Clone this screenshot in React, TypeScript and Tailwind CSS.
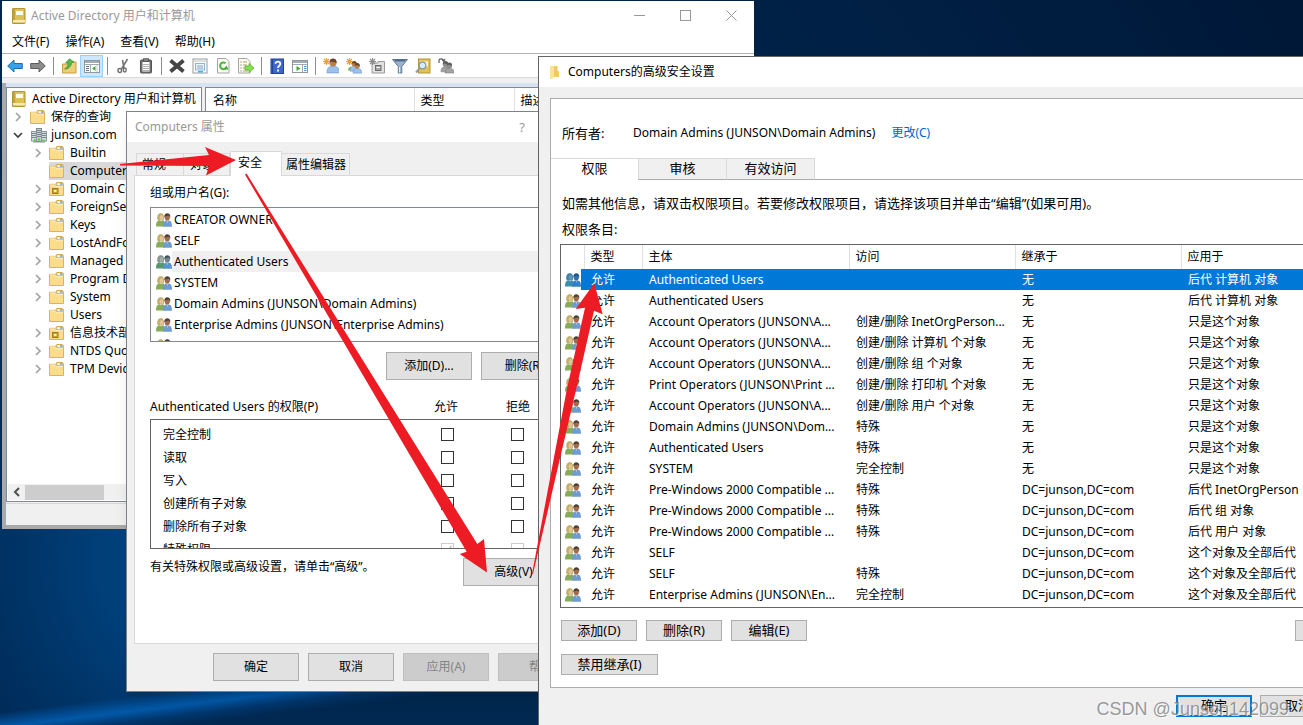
import type { ReactNode } from "react";

/* ---------- icons ---------- */

function ConsoleIcon() {
  return (
    <svg width="14" height="16" viewBox="0 0 14 16" className="shrink-0">
      <rect x="0.5" y="0.5" width="12.5" height="15" rx="0.5" fill="#d3ad3c" stroke="#b39437" />
      <rect x="1" y="1" width="2" height="14" fill="#c3a13c" />
      <rect x="3" y="1" width="9" height="13" fill="#dec05a" />
      <rect x="4" y="3" width="7" height="4" fill="#fffef2" />
      <rect x="1" y="12" width="12" height="2.500" fill="#f6ebb4" />
    </svg>
  );
}

function FolderIcon({ unit = false }: { unit?: boolean }) {
  return (
    <svg width="15" height="14" viewBox="0 0 15 14" className="shrink-0">
      <path d="M7 4V1.200L8 .5h5.500l.8.8V13H7z" fill="#efcf7d" stroke="#d2ab57" />
      <rect x="8.500" y="1.300" width="4.800" height="1.500" fill="#fff" />
      <rect x="11" y="1.300" width="2.400" height="1.400" fill="#4f9be0" />
      <path d="M.5 2.300h5.300L7.200 4H14.500V13.500H.5z" fill="#f9dc8c" stroke="#dab35d" />
      <path d="M1 3h4.700L7 4.700h7" fill="none" stroke="#fff0bd" />
      {unit && (
        <g>
          <rect x="3.500" y="6.500" width="5.500" height="5" fill="#c9a52c" stroke="#9d7f1c" />
          <rect x="5" y="8" width="2.500" height="1.800" fill="#fff6cf" />
        </g>
      )}
    </svg>
  );
}

function DomainIcon() {
  return (
    <svg width="16" height="15" viewBox="0 0 16 15" className="shrink-0">
      <rect x="5.500" y="0.500" width="5" height="13" fill="#c5ccd1" stroke="#7b858c" />
      <rect x="0.500" y="3.500" width="5" height="9.500" fill="#d5dadd" stroke="#8d969c" />
      <rect x="10.500" y="3.500" width="5" height="9.500" fill="#d5dadd" stroke="#8d969c" />
      <path d="M6 2.500h4M6 4.500h4M6 6.500h4M6 8.500h4M1 5.500h4M1 7.500h4M1 9.500h4M11 5.500h4M11 7.500h4M11 9.500h4" stroke="#7b878f" />
      <path d="M4 11.500v2M8 10.500v2M12.500 11.500v2" stroke="#4fd32f" strokeWidth="2" />
      <path d="M2 14h12" stroke="#8a949a" />
    </svg>
  );
}

function UsersIcon({ tone = "normal" }: { tone?: "normal" | "dim" | "blue" }) {
  const c = {
    normal: ["#bfae66", "#e6c19a", "#86ab59", "#4b4038", "#a06c4a", "#6f9bd0"],
    dim: ["#86968f", "#a2b0ab", "#57976c", "#435563", "#71838b", "#5693cf"],
    blue: ["#3f7fa5", "#5d9bb5", "#3a8fae", "#20558d", "#356fa0", "#2f7fce"],
  }[tone];
  return (
    <svg width="16" height="14" viewBox="0 0 16 14" className="shrink-0">
      <path d="M1.300 6.500C.8 2 2.500.2 4.800.2S8.500 2 8 6.500L6.700 7.600H2.600z" fill={c[0]} />
      <ellipse cx="5.500" cy="4.500" rx="1.900" ry="2.600" fill={c[1]} />
      <path d="M0 13.500C0 9.800.8 7.800 3 7.200L5.200 8.200 7 7.200C8.200 7.700 8.800 9 8.800 13.500z" fill={c[2]} />
      <path d="M8.300 4.200C8.100 1.400 9.600.2 11.300.2s3.300 1.200 3 4z" fill={c[3]} />
      <path d="M8.700 3.400C10 3.400 11.500 3 12.500 2.600l1.500 1C14 6 13 7.800 11.300 7.800S8.600 6 8.700 3.400z" fill={c[4]} />
      <path d="M7.200 13.800C7.200 9.800 8 8.200 10 7.500l1.300.9 1.500-.9C15 8 16 9.600 16 13.800z" fill={c[5]} />
      <path d="M10.800 8.500h1.100l-.5 2z" fill="#fff" fillOpacity=".5" />
    </svg>
  );
}

function Chevron({ open = false }: { open?: boolean }) {
  return open ? (
    <svg width="10" height="10" viewBox="0 0 10 10" className="shrink-0">
      <path d="M1 3l4 4 4-4" fill="none" stroke="#404040" strokeWidth="1.700" />
    </svg>
  ) : (
    <svg width="10" height="10" viewBox="0 0 10 10" className="shrink-0">
      <path d="M3 1l4 4-4 4" fill="none" stroke="#a3a3a3" strokeWidth="1.700" />
    </svg>
  );
}

/* ---------- toolbar ---------- */

const Person = ({ x, y, s, grey = false }: { x: number; y: number; s: number; grey?: boolean }) => (
  <g transform={`translate(${x} ${y}) scale(${s})`}>
    <path d="M0 12C0 8 1.500 6.500 5 6.500S10.500 8 10.500 12z" fill={grey ? "#a3a3a3" : "#9cc1ec"} stroke={grey ? "#777" : "#6c97cb"} strokeWidth=".6" />
    <circle cx="5" cy="3.600" r="3" fill={grey ? "#8c8c8c" : "#b9824d"} />
    <path d="M2 3.400C2 1 3.300 0 5 0s3.200 1 3 3.800C6.500 3.500 4 1.700 2 3.400z" fill={grey ? "#5d5d5d" : "#6b4526"} />
  </g>
);

const Spark = ({ color }: { color: string }) => (
  <path d="M3.500 0v7M0 3.500h7M1 1l5 5M6 1L1 6" stroke={color} strokeWidth="1.200" />
);

const Sheet = ({ children }: { children: ReactNode }) => (
  <g>
    <path d="M.5.5h8.500l3 3v11.500H.5z" fill="#fdfbf0" stroke="#a5a5a5" />
    {children}
  </g>
);

type Tool = { label: string; art: ReactNode; active?: boolean };

const toolGroups: Tool[][] = [
  [
    { label: "后退", art: <path d="M.7 8L7 2v3.500h8.300v5H7V14z" fill="#36a3e6" stroke="#1b6fae" /> },
    { label: "前进", art: <path d="M15.300 8L9 2v3.500H.7v5H9V14z" fill="#8b8b8b" stroke="#5c5c5c" /> },
  ],
  [
    {
      label: "上一级",
      art: (
        <g>
          <path d="M1.500 6h5l1.500-2h7v11H1.500z" fill="#f0cd78" stroke="#c69c45" />
          <path d="M3.500 11C6 9.500 7.300 7.500 7 5H4.500L8.500 .7 13 4l-2.500.8C10.500 8.500 7 11.500 3.500 11z" fill="#52b947" stroke="#358a2d" strokeWidth=".6" />
        </g>
      ),
    },
    {
      label: "显示树",
      active: true,
      art: (
        <g>
          <rect x=".5" y="2.500" width="15" height="12" fill="#fff" stroke="#8f979e" />
          <path d="M1 4h14" stroke="#a5adb5" strokeWidth="2" />
          <path d="M1 6.500h14M6.500 7v7.500" stroke="#a1a8ae" />
          <path d="M2 8.500h3M2 10.500h3M2 12.500h3" stroke="#5f7489" />
          <path d="M11.500 8v5L8 10.500z" fill="#43a83b" />
          <path d="M13 7v7" stroke="#c5cad0" />
        </g>
      ),
    },
  ],
  [
    {
      label: "剪切",
      art: (
        <g fill="none" stroke="#6f6f6f">
          <path d="M12.500 1L6.500 11M7.500 2L9 10" strokeWidth="1.500" />
          <ellipse cx="4.800" cy="12.500" rx="1.800" ry="2" strokeWidth="1.400" />
          <ellipse cx="9.800" cy="12" rx="1.400" ry="2" strokeWidth="1.400" />
        </g>
      ),
    },
    {
      label: "复制",
      art: (
        <g>
          <rect x="2.500" y="2" width="11" height="13" rx="1" fill="#6f6f6f" stroke="#555" />
          <rect x="4.500" y="4" width="7" height="9.500" fill="#fff" />
          <path d="M5 6.500h6M5 8.500h6M5 10.500h6M5 12.500h6" stroke="#b0b0b0" />
          <rect x="5.500" y=".8" width="5" height="2.700" fill="#8a8a8a" stroke="#555" />
        </g>
      ),
    },
  ],
  [
    { label: "删除", art: <path d="M1.500 2.500l13 11M14.500 2.500l-13 11" stroke="#454545" strokeWidth="3.800" /> },
    {
      label: "属性",
      art: (
        <g>
          <rect x="1" y="1" width="14" height="14" fill="#fff" stroke="#9a9a9a" />
          <path d="M2 3h12" stroke="#b6c0ca" />
          <rect x="3.500" y="5.500" width="9" height="6.500" fill="#eef6fd" stroke="#8fb3d3" />
          <path d="M5 8h6M5 10h6" stroke="#8c9fb1" />
          <path d="M6 13.700h5" stroke="#3bb3f0" strokeWidth="1.600" />
        </g>
      ),
    },
    {
      label: "刷新",
      art: (
        <g transform="translate(2 0)">
          <Sheet>
            <path d="M8.500 5.300A3.300 3.300 0 1 0 9.300 9.500" fill="none" stroke="#4ab544" strokeWidth="2" />
            <path d="M6.500 11.500h5L9.500 7.500z" fill="#3fae3a" />
          </Sheet>
        </g>
      ),
    },
    {
      label: "导出列表",
      art: (
        <g>
          <Sheet>
            <path d="M2.500 4h1M2.500 7h1M2.500 10h1M2.500 13h1" stroke="#666" />
            <path d="M5 4h4M5 7h4M5 10h3M5 13h5" stroke="#b3a36a" />
          </Sheet>
          <path d="M7 8h4V5.500l5 4.500-5 4.500V12H7z" fill="#84e04c" stroke="#4fae2c" strokeWidth=".7" />
        </g>
      ),
    },
  ],
  [
    {
      label: "帮助",
      art: (
        <g>
          <rect x="2" y="1" width="12.500" height="14.500" fill="#3f66cc" stroke="#23429c" />
          <path d="M3.500 1v14.500" stroke="#23429c" />
          <path d="M6.500 5.800C6.500 2.800 11.500 3 11.300 6 11.200 7.800 9 7.800 9 10M9 11.500v2" fill="none" stroke="#fff" strokeWidth="1.800" />
        </g>
      ),
    },
    {
      label: "操作窗格",
      art: (
        <g>
          <rect x=".5" y="2.500" width="15" height="12" fill="#fff" stroke="#8f979e" />
          <path d="M1 4h14" stroke="#a5adb5" strokeWidth="2" />
          <path d="M1 6.500h14M10.500 7v7.500" stroke="#a1a8ae" />
          <path d="M12 8.500h2.500M12 10.500h2.500M12 12.500h2.500" stroke="#4e93c4" />
          <path d="M4.500 8v5l4-2.500z" fill="#43a83b" />
        </g>
      ),
    },
  ],
  [
    { label: "新建用户", art: <g><Person x={4} y={0.5} s={1.200} /><Spark color="#f0a02c" /></g> },
    { label: "新建组", art: <g><path d="M2 12.500C2.300 9 4 8.500 7 9l1 3.500z" fill="#7fb34d" /><Person x={4} y={3} s={0.850} /><Person x={7} y={5} s={0.850} /><Spark color="#f0a02c" /></g> },
    {
      label: "新建组织单位",
      art: (
        <g>
          <path d="M3 5h6V3.500h6.500v11.500H3z" fill="#e2e2e2" stroke="#9a9a9a" />
          <rect x="6.500" y="7.500" width="5.500" height="5" fill="#a5a5a5" stroke="#6c6c6c" />
          <path d="M7.500 9.500h3.500" stroke="#fff" />
          <Spark color="#8e8e8e" />
        </g>
      ),
    },
    {
      label: "筛选",
      art: (
        <g>
          <path d="M.5 1.500h15L9.800 8.500v6.500L6.300 15V8.500z" fill="#9db4cb" stroke="#607a95" />
          <path d="M2 1.500h12l-1.300 2H3.300z" fill="#4d6a88" />
          <path d="M7.500 9v5.500" stroke="#e9f1f9" />
        </g>
      ),
    },
    {
      label: "查找",
      art: (
        <g>
          <rect x="3.500" y="1" width="11.500" height="14" fill="#e2c257" stroke="#b39437" />
          <rect x="5" y="3.500" width="8" height="5" fill="#fff6cf" />
          <circle cx="7.500" cy="7.500" r="3.300" fill="#d8edf8" stroke="#7f9bac" strokeWidth="1.200" />
          <path d="M5 10L1 14.500" stroke="#9a9a9a" strokeWidth="2" />
        </g>
      ),
    },
    {
      label: "添加到组",
      art: (
        <g>
          <Person x={3} y={3} s={0.900} grey />
          <Person x={7} y={4.500} s={0.880} grey />
          <path d="M1 5V2.500C1 .5 5 .3 5.500 2.500M4 1.500l1.800 2L7 1" fill="none" stroke="#5a5a5a" strokeWidth="1.200" />
        </g>
      ),
    },
  ],
];

function Toolbar() {
  return (
    <div className="flex h-[23px] shrink-0 items-center pt-px pl-px">
      {toolGroups.map((group, g) => (
        <div key={g} className="flex items-center">
          {g > 0 && <span className="mr-[3px] ml-1 h-[18px] w-px bg-[#8c8c8c]" />}
          {group.map((t) => (
            <button
              key={t.label}
              aria-label={t.label}
              className={
                t.active
                  ? "flex h-[22px] w-[23px] items-center justify-center border border-[#99d1ff] bg-[#cce8ff]"
                  : "flex h-[22px] w-[23px] items-center justify-center"
              }
            >
              <svg width="16" height="16" viewBox="0 0 16 16" className="shrink-0">{t.art}</svg>
            </button>
          ))}
        </div>
      ))}
    </div>
  );
}

/* ---------- directory console ---------- */

type Node = { name: string; expandable?: boolean; selected?: boolean; unit?: boolean };

const containers: Node[] = [
  { name: "Builtin", expandable: true },
  { name: "Computers", selected: true },
  { name: "Domain Controllers", expandable: true, unit: true },
  { name: "ForeignSecurityPrincipals", expandable: true },
  { name: "Keys", expandable: true },
  { name: "LostAndFound", expandable: true },
  { name: "Managed Service Accounts", expandable: true },
  { name: "Program Data", expandable: true },
  { name: "System", expandable: true },
  { name: "Users" },
  { name: "信息技术部", expandable: true, unit: true },
  { name: "NTDS Quotas", expandable: true },
  { name: "TPM Devices", expandable: true },
];

function ConsoleWindow() {
  return (
    <section className="absolute top-px left-0.5 flex h-[528px] w-[752px] flex-col bg-white">
      <header className="flex h-[29px] shrink-0 items-center pl-2.5 text-[#999999]">
        <ConsoleIcon />
        <h1 className="ml-[5px] flex-1">Active Directory 用户和计算机</h1>
        <button aria-label="最小化" className="flex h-full w-[46px] items-center justify-center">
          <svg width="11" height="11" viewBox="0 0 11 11"><path d="M0 5.500h11" stroke="#999" /></svg>
        </button>
        <button aria-label="最大化" className="flex h-full w-[46px] items-center justify-center">
          <svg width="11" height="11" viewBox="0 0 11 11"><rect x=".5" y=".5" width="10" height="10" fill="none" stroke="#999" /></svg>
        </button>
        <button aria-label="关闭" className="flex h-full w-[46px] items-center justify-center">
          <svg width="11" height="11" viewBox="0 0 11 11"><path d="M.5.5l10 10M10.500.5l-10 10" stroke="#999" /></svg>
        </button>
      </header>
      <nav className="flex h-6 shrink-0 items-center gap-4 border-b border-[#aeb3bd] pl-2.5">
        <button>文件(F)</button>
        <button>操作(A)</button>
        <button>查看(V)</button>
        <button>帮助(H)</button>
      </nav>
      <Toolbar />
      <div className="h-1.5 shrink-0 border-t border-[#dadada] bg-[#f0f0f0]" />
      <div className="flex min-h-0 flex-1 flex-col border-b-4 border-l-4 border-[#a9a9a9] bg-[#f0f0f0]">
        <div className="h-1 shrink-0 bg-[#d5e3f3]" />
        <div className="flex min-h-0 flex-1 gap-[3px]">
          <div className="flex w-[196px] flex-col border border-[#828790] bg-white">
            <ul className="flex-1 overflow-hidden pt-0.5">
              <li className="flex h-[18px] items-center pl-[5px]">
                <ConsoleIcon />
                <span className="ml-1.5 whitespace-nowrap">Active Directory 用户和计算机</span>
              </li>
              <li className="flex h-[18px] items-center pl-1.5">
                <Chevron />
                <span className="ml-[7px]"><FolderIcon /></span>
                <span className="ml-1.5 whitespace-nowrap">保存的查询</span>
              </li>
              <li className="flex h-[18px] items-center pl-1.5">
                <Chevron open />
                <span className="ml-2"><DomainIcon /></span>
                <span className="ml-1 whitespace-nowrap">junson.com</span>
              </li>
              {containers.map((n) => (
                <li key={n.name} className="flex h-[18px] items-center pl-[26px]">
                  <span className="w-4 shrink-0">{n.expandable && <Chevron />}</span>
                  <span className={n.selected ? "flex h-full flex-1 items-center bg-[#d9d9d9]" : "flex h-full flex-1 items-center"}>
                    <FolderIcon unit={n.unit} />
                    <span className="ml-1.5 whitespace-nowrap">{n.name}</span>
                  </span>
                </li>
              ))}
            </ul>
            <div className="m-px flex h-4 shrink-0 items-center bg-[#f0f0f0]">
              <button aria-label="向左滚动" className="flex w-[17px] justify-center">
                <svg width="8" height="10" viewBox="0 0 8 10"><path d="M6 1L2 5l4 4" fill="none" stroke="#505050" strokeWidth="2" /></svg>
              </button>
              <span className="h-[15px] w-[79px] bg-[#cdcdcd]" />
            </div>
          </div>
          <div className="flex-1 border border-[#828790] bg-white">
            <table className="w-full table-fixed border-collapse text-left">
              <thead>
                <tr className="h-6 border-b border-[#a0a0a0]">
                  <th className="w-[208px] border-r border-[#e0e0e0] p-0 pt-0.5 pl-[7px] font-normal">名称</th>
                  <th className="w-[100px] border-r border-[#e0e0e0] p-0 pt-0.5 pl-1.5 font-normal">类型</th>
                  <th className="p-0 pt-0.5 pl-1.5 font-normal">描述</th>
                </tr>
              </thead>
            </table>
          </div>
        </div>
        <footer className="mt-px h-[22px] shrink-0 border-t border-[#d7d7d7]" />
      </div>
    </section>
  );
}

/* ---------- properties dialog ---------- */

const button = "flex items-center justify-center border border-[#adadad] bg-[#e1e1e1]";
const buttonOff = "flex items-center justify-center border border-[#bfbfbf] bg-[#cccccc] text-[#838383]";

const principals = [
  "CREATOR OWNER",
  "SELF",
  "Authenticated Users",
  "SYSTEM",
  "Domain Admins (JUNSON\\Domain Admins)",
  "Enterprise Admins (JUNSON\\Enterprise Admins)",
];

const permissions = ["完全控制", "读取", "写入", "创建所有子对象", "删除所有子对象", "特殊权限"];

function PermissionBox({ label, special }: { label: string; special?: "on" | "off" }) {
  return (
    <span className="relative flex h-[13px] w-[13px]">
      <input
        type="checkbox"
        aria-label={label}
        disabled={!!special}
        defaultChecked={special === "on"}
        className="h-[13px] w-[13px] appearance-none border border-[#333333] bg-white disabled:border-[#cccccc]"
      />
      {special === "on" && (
        <svg width="13" height="13" viewBox="0 0 13 13" className="absolute inset-0">
          <path d="M2.500 6.500l3 3 5-6.500" fill="none" stroke="#bbb" strokeWidth="1.300" />
        </svg>
      )}
    </span>
  );
}

function PropertiesDialog() {
  return (
    <section className="absolute top-[111px] left-[126px] flex h-[581px] w-[466px] flex-col border border-[#7d8288] bg-[#f0f0f0] shadow-lg">
      <header className="flex h-[30px] shrink-0 items-center bg-white pr-[61px] pl-2 text-[#999999]">
        <h2 className="flex-1">Computers 属性</h2>
        <button aria-label="帮助" className="w-4 text-[13px]">?</button>
      </header>
      <div className="flex items-end pt-[9px] pl-[9px] leading-none" role="tablist">
        <button role="tab" className="h-[22px] w-12 border border-b-0 border-[#d9d9d9] pl-[5px] text-left">常规</button>
        <button role="tab" className="h-[22px] w-[46px] border border-b-0 border-l-0 border-[#d9d9d9] pl-1.5 text-left">对象</button>
        <button role="tab" aria-selected="true" className="relative z-10 -mb-px h-[25px] w-[52px] border border-b-0 border-[#d9d9d9] bg-white pb-0.5 pl-[7px] text-left">安全</button>
        <button role="tab" className="h-[22px] w-[68px] border border-b-0 border-l-0 border-[#d9d9d9] pl-1 text-left whitespace-nowrap">属性编辑器</button>
      </div>
      <div className="mr-2 ml-[7px] flex h-[469px] shrink-0 flex-col border border-[#d9d9d9] bg-white pr-[15px] pl-[15px]">
        <p className="mt-[7px] h-5 leading-5">组或用户名(G):</p>
        <ul className="mt-1 h-[135px] shrink-0 overflow-hidden border border-[#828790] pt-px">
          {principals.map((p, i) => (
            <li key={p} className="flex h-[21px] items-center pl-[5px]">
              <UsersIcon tone={i === 2 ? "dim" : "normal"} />
              <span className={i === 2 ? "flex h-full flex-1 items-center bg-[#f0f0f0] pl-0.5" : "flex h-full flex-1 items-center pl-0.5"}>{p}</span>
            </li>
          ))}
          <li className="flex h-[21px] items-center pl-[5px]"><UsersIcon /></li>
        </ul>
        <div className="mt-2.5 flex shrink-0 justify-end gap-[9px]">
          <button className={`${button} h-7 w-[86px]`}>添加(D)...</button>
          <button className={`${button} h-7 w-[86px]`}>删除(R)</button>
        </div>
        <div className="mt-[17px] flex h-5 shrink-0 items-center">
          <span className="flex-1">Authenticated Users 的权限(P)</span>
          <span className="w-[72px]">允许</span>
          <span className="w-[61px]">拒绝</span>
        </div>
        <div className="mt-0.5 h-[130px] shrink-0 overflow-hidden border border-[#646464] pt-[3px]">
          <table className="w-full table-fixed border-collapse">
            <tbody>
              {permissions.map((p, i) => (
                <tr key={p} className="h-[23px]">
                  <td className="p-0 pl-3">{p}</td>
                  <td className="w-[70px] p-0"><PermissionBox label={`允许 ${p}`} special={i === 5 ? "on" : undefined} /></td>
                  <td className="w-[55px] p-0"><PermissionBox label={`拒绝 ${p}`} special={i === 5 ? "off" : undefined} /></td>
                </tr>
              ))}
            </tbody>
          </table>
        </div>
        <div className="flex shrink-0 items-start pt-[9px]">
          <p className="flex-1 leading-[18px]">有关特殊权限或高级设置，请单击“高级”。</p>
          <button className={`${button} mr-[3px] h-7 w-[101px]`}>高级(V)</button>
        </div>
      </div>
      <div className="mt-[9px] flex justify-end gap-[9px] pr-[7px]">
        <button className={`${button} h-7 w-[86px]`}>确定</button>
        <button className={`${button} h-7 w-[86px]`}>取消</button>
        <button disabled className={`${buttonOff} h-7 w-[86px]`}>应用(A)</button>
        <button disabled className={`${buttonOff} h-7 w-[86px]`}>帮助</button>
      </div>
    </section>
  );
}

/* ---------- advanced security window ---------- */

const DOMAIN = "DC=junson,DC=com";

const entries: [string, string, string, string][] = [
  ["Authenticated Users", "", "无", "后代 计算机 对象"],
  ["Authenticated Users", "", "无", "后代 计算机 对象"],
  ["Account Operators (JUNSON\\A...", "创建/删除 InetOrgPerson...", "无", "只是这个对象"],
  ["Account Operators (JUNSON\\A...", "创建/删除 计算机 个对象", "无", "只是这个对象"],
  ["Account Operators (JUNSON\\A...", "创建/删除 组 个对象", "无", "只是这个对象"],
  ["Print Operators (JUNSON\\Print ...", "创建/删除 打印机 个对象", "无", "只是这个对象"],
  ["Account Operators (JUNSON\\A...", "创建/删除 用户 个对象", "无", "只是这个对象"],
  ["Domain Admins (JUNSON\\Dom...", "特殊", "无", "只是这个对象"],
  ["Authenticated Users", "特殊", "无", "只是这个对象"],
  ["SYSTEM", "完全控制", "无", "只是这个对象"],
  ["Pre-Windows 2000 Compatible ...", "特殊", DOMAIN, "后代 InetOrgPerson"],
  ["Pre-Windows 2000 Compatible ...", "特殊", DOMAIN, "后代 组 对象"],
  ["Pre-Windows 2000 Compatible ...", "特殊", DOMAIN, "后代 用户 对象"],
  ["SELF", "", DOMAIN, "这个对象及全部后代"],
  ["SELF", "特殊", DOMAIN, "这个对象及全部后代"],
  ["Enterprise Admins (JUNSON\\En...", "完全控制", DOMAIN, "这个对象及全部后代"],
];

function EntriesTable() {
  const th = "border-l border-[#e0e0e0] p-0 pl-1.5 font-normal";
  return (
    <div className="h-[364px] shrink-0 border border-[#646464]">
      <table className="w-full table-fixed border-collapse text-left whitespace-nowrap">
        <thead>
          <tr className="h-6">
            <th className="w-[23px] p-0" aria-label="图标" />
            <th className={`${th} w-[58px]`}>类型</th>
            <th className={`${th} w-[207px]`}>主体</th>
            <th className={`${th} w-[166px]`}>访问</th>
            <th className={`${th} w-[166px]`}>继承于</th>
            <th className={th}>应用于</th>
          </tr>
        </thead>
        <tbody>
          {entries.map(([who, access, from, scope], i) => (
            <tr key={i} className={i === 0 ? "h-[21px] bg-[#0078d7] text-white" : "h-[21px]"}>
              <td className={i === 0 ? "bg-[linear-gradient(to_right,#fff_20px,#0078d7_20px)] p-0 pl-1" : "p-0 pl-1"}>
                <UsersIcon tone={i === 0 ? "blue" : "normal"} />
              </td>
              <td className="p-0 pl-[7px]">允许</td>
              <td className="overflow-hidden p-0 pl-[7px]">{who}</td>
              <td className="overflow-hidden p-0 pl-[7px]">{access}</td>
              <td className="overflow-hidden p-0 pl-[7px]">{from}</td>
              <td className="overflow-hidden p-0 pl-[7px]">{scope}</td>
            </tr>
          ))}
        </tbody>
      </table>
    </div>
  );
}

function AdvancedWindow() {
  return (
    <section className="absolute top-14 -right-[42px] left-[538px] flex h-[680px] flex-col border border-[#646464] bg-[#f0f0f0]">
      <header className="flex h-[30px] shrink-0 items-center bg-white pl-[11px]">
        <svg width="9" height="13" viewBox="0 0 9 13"><path d="M0 0h4v11l-2 2H0z" fill="#fbe29a" /><path d="M4 0h3.500v5H9v6H4z" fill="#f3c860" /></svg>
        <h2 className="ml-[9px]">Computers的高级安全设置</h2>
      </header>
      <div className="mx-[11px] mt-[11px] flex h-[590px] shrink-0 flex-col border border-[#acacac] bg-white text-[13px]">
        <div className="mt-6 flex h-5 items-center pl-[11px]">
          <span className="w-[71px]">所有者:</span>
          <span className="text-[12px]">Domain Admins (JUNSON\Domain Admins)</span>
          <a href="#owner" className="ml-4 text-[12px] text-[#0066cc]">更改(C)</a>
        </div>
        <div role="tablist" className="mt-[15px] flex shrink-0 leading-none">
          <button role="tab" aria-selected="true" className="h-[22px] w-[87px] border-t border-[#d9d9d9] pb-0.5">权限</button>
          <button role="tab" className="h-[22px] w-[89px] border border-[#d9d9d9] border-b-[#acacac] bg-[#f0f0f0] pb-0.5">审核</button>
          <button role="tab" className="h-[22px] w-[88px] border border-l-0 border-[#d9d9d9] border-b-[#acacac] bg-[#f0f0f0] pb-0.5">有效访问</button>
          <span className="flex-1 border-b border-[#acacac]" />
        </div>
        <div className="flex flex-col pr-2 pl-[9px]">
          <p className="mt-[13px] h-5 pl-0.5 leading-5 whitespace-nowrap">如需其他信息，请双击权限项目。若要修改权限项目，请选择该项目并单击“编辑”(如果可用)。</p>
          <p className="mt-[6px] h-5 pl-0.5 leading-5">权限条目:</p>
          <div className="mt-[5px] text-[12px]"><EntriesTable /></div>
          <div className="mt-3 flex gap-[9px] pl-px">
            <button className={`${button} h-[21px] w-[76px] pb-0.5`}>添加(D)</button>
            <button className={`${button} h-[21px] w-[76px] pb-0.5`}>删除(R)</button>
            <button className={`${button} h-[21px] w-[76px] pb-0.5`}>编辑(E)</button>
            <span className="flex-1" />
            <button aria-label="还原默认值" className={`${button} h-[21px] w-[29px]`} />
          </div>
          <div className="mt-[13px] flex pl-px">
            <button className={`${button} h-[21px] w-[97px] pb-0.5`}>禁用继承(I)</button>
          </div>
        </div>
      </div>
      <footer className="flex justify-end gap-2 pt-[7px] pr-2 text-[13px]">
        <button className="flex h-[22px] w-[76px] items-center justify-center border-2 border-[#0078d7] bg-[#e1e1e1] pb-0.5">确定</button>
        <button className={`${button} h-[22px] w-[76px] pb-0.5`}>取消</button>
      </footer>
    </section>
  );
}

/* ---------- desktop ---------- */

export default function App() {
  return (
    <main className="relative h-screen w-full overflow-hidden bg-[#002850] bg-[linear-gradient(173deg,transparent_0_80.5%,#0358a8_82.2%,#00376e_83.3%,#002850_84.5%),radial-gradient(circle_at_220px_560px,#004a88,#003f78_120px,#002c5a_260px,#00254c_600px,#001838_1200px)] font-['Noto_Sans','Noto_Sans_CJK_SC',sans-serif] text-[12px] leading-[18px] text-black select-none">
      <ConsoleWindow />
      <PropertiesDialog />
      <AdvancedWindow />
      <svg width="1303" height="725" viewBox="0 0 1303 725" className="pointer-events-none absolute top-0 left-0 z-20" fill="#ed1c24">
        <path d="M120 164L209 155 205 147 236 160 206 175.500 209 166 120 165.500z" />
        <path d="M245 174.500L246.700 173.800 477.300 544 484 539 487 572.500 459.700 554 466.700 551.700z" />
        <path d="M532 574L566.700 390 585 307.700 575.700 309 594.300 283.300 602.700 314.300 594 310.700 576 390 533 574z" />
      </svg>
      <p className="pointer-events-none absolute right-3.5 bottom-1 font-['Liberation_Sans','Noto_Sans_CJK_SC',sans-serif] text-[18px] leading-6 text-[#808080]/80 [text-shadow:1px_1px_0_rgba(255,255,255,0.7)]">
        CSDN @Junson142099
      </p>
    </main>
  );
}
